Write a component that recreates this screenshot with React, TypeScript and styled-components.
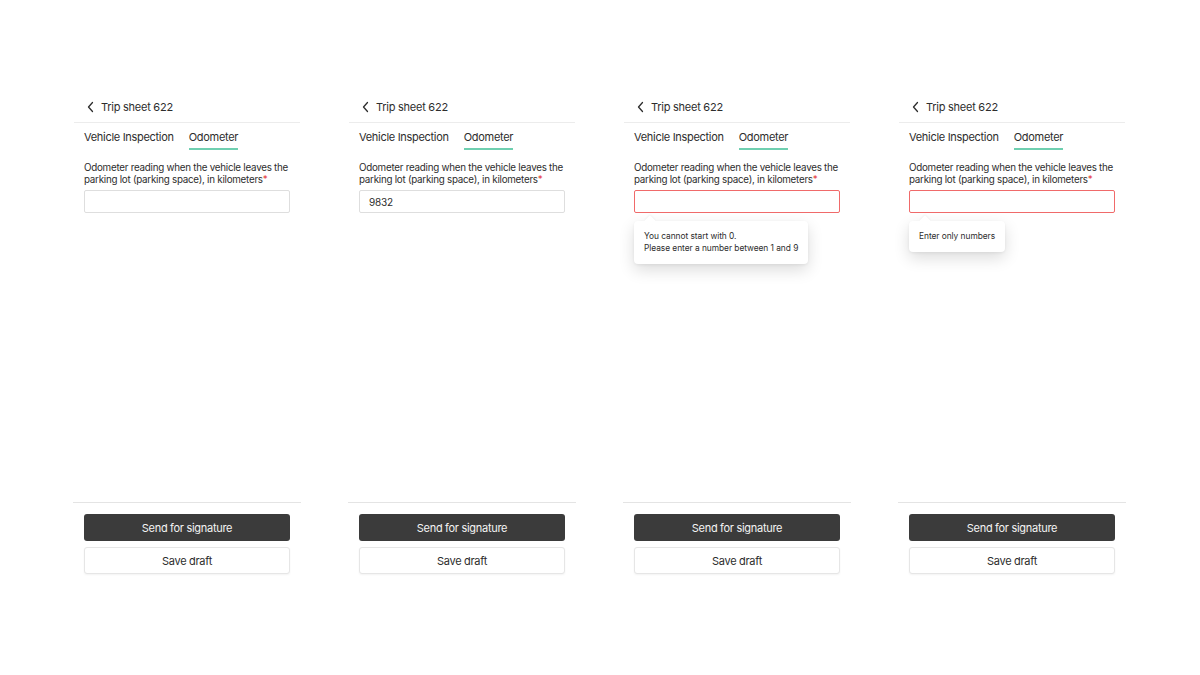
import React from "react";
import styled, { createGlobalStyle } from "styled-components";

const Global = createGlobalStyle`
  html, body { margin: 0; padding: 0; background: #fff; }
  body { font-family: Inter, "Noto Sans", sans-serif; color: #2f2f2f; -webkit-font-smoothing: antialiased; }
  * { box-sizing: border-box; }
`;

const Page = styled.div`
  width: 1200px;
  height: 675px;
  display: flex;
  gap: 47px;
  padding: 95px 0 0 73px;
`;

const Panel = styled.div`
  width: 228px;
  height: 485px;
  display: flex;
  flex-direction: column;
`;

const Header = styled.div`
  height: 28px;
  margin: 0 1px;
  display: flex;
  align-items: center;
  gap: 5px;
  padding: 0 12px 3px 12px;
  border-bottom: 1px solid #ececec;
  font-size: 11px;
  letter-spacing: -0.25px;
  color: #2d2d2d;
`;

const Body = styled.div`
  flex: 1;
  padding: 0 11px;
  display: flex;
  flex-direction: column;
`;

const Tabs = styled.div`
  display: flex;
  gap: 15px;
`;

const Tab = styled.div<{ $active?: boolean }>`
  padding-top: 7px;
  padding-bottom: 4px;
  line-height: 14px;
  font-size: 11px;
  letter-spacing: -0.3px;
  color: #2d2d2d;
  border-bottom: 2px solid ${(p) => (p.$active ? "#6fcfb0" : "transparent")};
`;

const Label = styled.div`
  margin-top: 12px;
  font-size: 9.8px;
  letter-spacing: -0.25px;
  line-height: 12px;
  color: #2d2d2d;
`;

const Req = styled.span`
  color: #e53935;
`;

const Field = styled.div`
  position: relative;
  margin-top: 4px;
`;

const Input = styled.div<{ $error?: boolean }>`
  height: 23px;
  border: ${(p) => (p.$error ? "1.5px solid #f06a6a" : "1px solid #dedede")};
  border-radius: 2px;
  padding: 0 9px;
  display: flex;
  align-items: center;
  font-size: 10px;
  letter-spacing: -0.2px;
  color: #2d2d2d;
`;

const Tooltip = styled.div`
  position: absolute;
  top: 31px;
  left: 0;
  background: #fff;
  border-radius: 4px;
  padding: 9px 10px 10px 10px;
  font-size: 8.4px;
  letter-spacing: -0.05px;
  line-height: 12px;
  color: #2d2d2d;
  white-space: nowrap;
  box-shadow: 0 6px 16px rgba(0, 0, 0, 0.14), 0 1px 3px rgba(0, 0, 0, 0.06);
  &::before {
    content: "";
    position: absolute;
    top: -4px;
    left: 12px;
    width: 8px;
    height: 8px;
    background: #fff;
    transform: rotate(45deg);
    box-shadow: -1px -1px 2px rgba(0, 0, 0, 0.04);
  }
`;

const Footer = styled.div`
  border-top: 1px solid #e4e4e4;
  padding: 11px 11px 6px;
  display: flex;
  flex-direction: column;
  gap: 6px;
`;

const Button = styled.button<{ $primary?: boolean }>`
  height: 27px;
  border-radius: 3px;
  font-family: Inter, "Noto Sans", sans-serif;
  font-size: 11px;
  letter-spacing: -0.3px;
  cursor: pointer;
  background: ${(p) => (p.$primary ? "#3b3b3b" : "#fff")};
  color: ${(p) => (p.$primary ? "#f4f4f4" : "#2d2d2d")};
  border: ${(p) => (p.$primary ? "none" : "1px solid #e6e6e6")};
  box-shadow: ${(p) => (p.$primary ? "none" : "0 1px 2px rgba(0,0,0,0.05)")};
`;

const Chevron = () => (
  <svg width="10" height="12" viewBox="0 0 10 12" fill="none">
    <path d="M6.5 1.5 L2.5 6 L6.5 10.5" stroke="#2d2d2d" strokeWidth="1.3" strokeLinecap="round" strokeLinejoin="round" />
  </svg>
);

type Variant = { value?: string; error?: boolean; tip?: React.ReactNode };

const variants: Variant[] = [
  {},
  { value: "9832" },
  {
    error: true,
    tip: (
      <>
        You cannot start with 0.
        <br />
        Please enter a number between 1 and 9
      </>
    ),
  },
  { error: true, tip: "Enter only numbers" },
];

const Screen = ({ value, error, tip }: Variant) => (
  <Panel>
    <Header>
      <Chevron />
      <span>Trip sheet 622</span>
    </Header>
    <Body>
      <Tabs>
        <Tab>Vehicle Inspection</Tab>
        <Tab $active>Odometer</Tab>
      </Tabs>
      <Label>
        Odometer reading when the vehicle leaves the parking lot (parking space), in kilometers<Req>*</Req>
      </Label>
      <Field>
        <Input $error={error}>{value}</Input>
        {tip && <Tooltip>{tip}</Tooltip>}
      </Field>
    </Body>
    <Footer>
      <Button $primary>Send for signature</Button>
      <Button>Save draft</Button>
    </Footer>
  </Panel>
);

export default function App() {
  return (
    <>
      <Global />
      <Page>
        {variants.map((v, i) => (
          <Screen key={i} {...v} />
        ))}
      </Page>
    </>
  );
}
